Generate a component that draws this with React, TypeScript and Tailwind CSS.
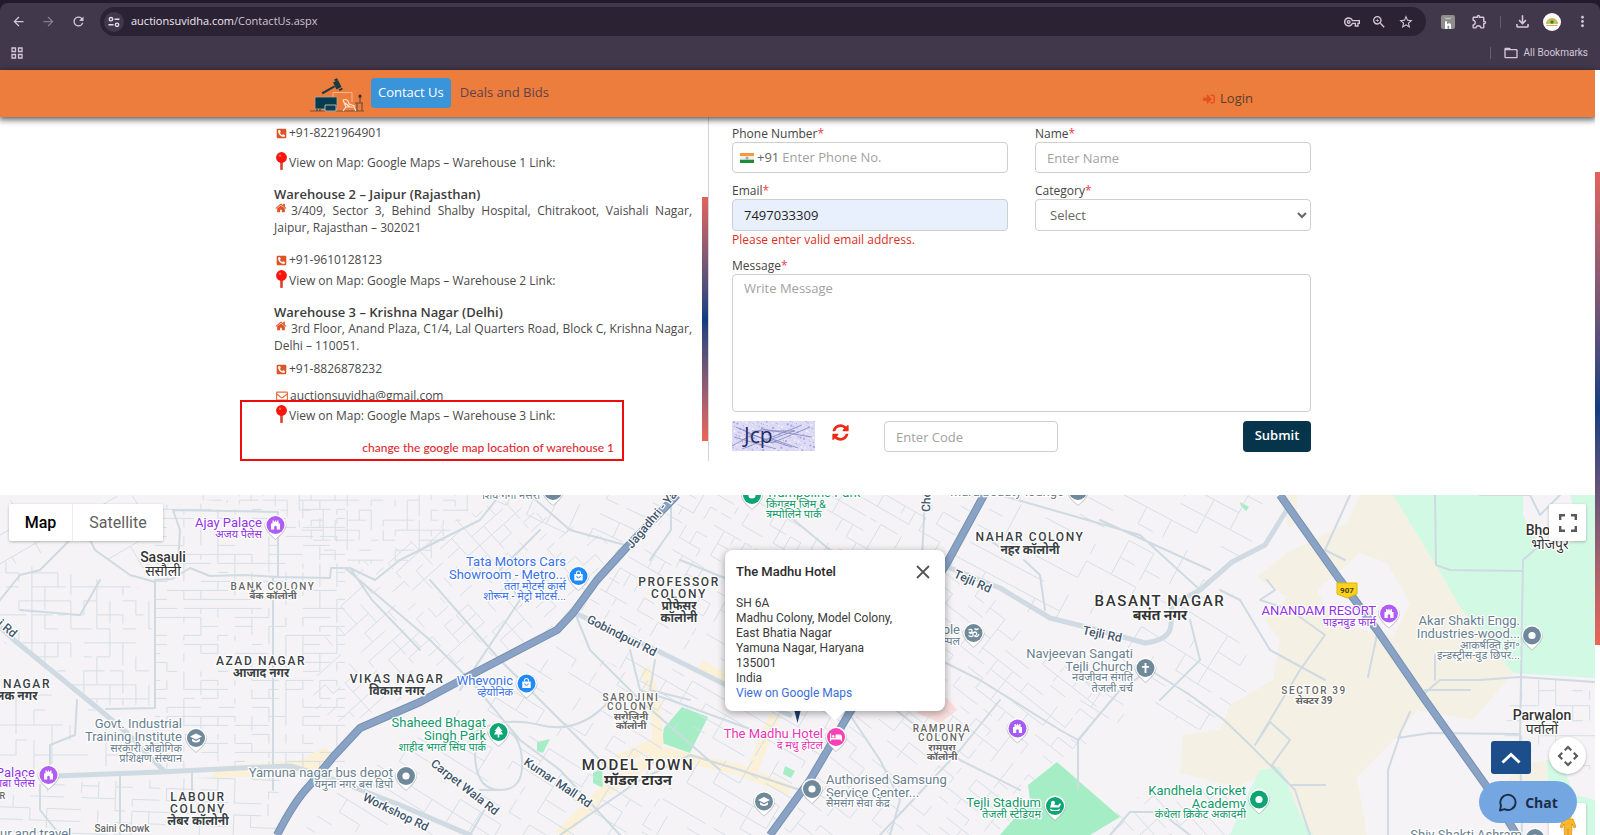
import type { ReactNode } from "react";
import {
  MdArrowBack,
  MdArrowForward,
  MdFolderOpen,
  MdMoreVert,
  MdOutlineExtension,
  MdOutlineFileDownload,
  MdOutlineVpnKey,
  MdRefresh,
  MdStarBorder,
  MdZoomIn,
} from "react-icons/md";
import { FaPhoneSquareAlt, FaRegEnvelope, FaSignInAlt } from "react-icons/fa";

/* ---------- Browser chrome ---------- */

function IconButton({ label, children, dim }: { label: string; children: ReactNode; dim?: boolean }) {
  return (
    <button
      type="button"
      aria-label={label}
      className={
        dim
          ? "flex size-6 shrink-0 items-center justify-center text-[15px] text-[#857d8e]"
          : "flex size-6 shrink-0 items-center justify-center text-[15px] text-[#d3c8da]"
      }
    >
      {children}
    </button>
  );
}

function BrowserBar() {
  return (
    <div className="bg-[#241a2d] pt-[3px] font-['Open_Sans','Noto_Sans',sans-serif] text-[#d3c8da]">
      <div className="rounded-t-lg bg-[#42384b]">
        <div className="flex items-center pt-1 pr-[6px] pl-[6px]">
          <IconButton label="Back"><MdArrowBack /></IconButton>
          <span className="w-[6px]" />
          <IconButton label="Forward" dim><MdArrowForward /></IconButton>
          <span className="w-[6px]" />
          <IconButton label="Reload"><MdRefresh /></IconButton>
          <div className="ml-[10px] flex h-[29px] flex-1 items-center rounded-full bg-[#2b2234] pr-2 pl-1">
            <span className="flex size-5 items-center justify-center rounded-full bg-[#42384b]">
              <svg viewBox="0 0 12 12" className="size-3" fill="none" stroke="#e4dce9" strokeWidth="1.4">
                <circle cx="3" cy="3.2" r="1.7" />
                <path d="M6.5 3.2H11.5M.5 8.8H5.5" />
                <circle cx="9" cy="8.8" r="1.7" />
              </svg>
            </span>
            <span className="ml-[7px] flex-1 text-[11px] text-[#cfc6d6]">
              <span className="text-[#efe9f3]">auctionsuvidha.com</span>/ContactUs.aspx
            </span>
            <IconButton label="Passwords"><MdOutlineVpnKey className="text-[16px]" /></IconButton>
            <span className="w-[3px]" />
            <IconButton label="Zoom"><MdZoomIn className="text-[16px]" /></IconButton>
            <span className="w-[3px]" />
            <IconButton label="Bookmark"><MdStarBorder className="text-[16px]" /></IconButton>
          </div>
          <span className="w-[10px]" />
          <IconButton label="Extension">
            <svg viewBox="0 0 14 14" className="size-[14px]">
              <rect width="14" height="14" rx="2" fill="#8e8e8c" />
              <path d="M4 2.5 5.5 4 7 3 8.5 4 10 2.5" fill="none" stroke="#d9d9d6" />
              <path d="M4 6.500 6 6V9Q10 7 10 10V14H8.200V11Q7 10 6.500 11V14H4Z" fill="#fff" />
            </svg>
          </IconButton>
          <span className="w-[7px]" />
          <IconButton label="Extensions"><MdOutlineExtension className="text-[17px]" /></IconButton>
          <span className="mx-[9px] h-3 w-px bg-[#675d70]" />
          <IconButton label="Downloads"><MdOutlineFileDownload className="text-[19px]" /></IconButton>
          <span className="w-[6px]" />
          <IconButton label="Profile">
            <svg viewBox="0 0 18 18" className="size-[18px] shrink-0">
              <circle cx="9" cy="9" r="9" fill="#fff" />
              <path d="M3 11A6 6 0 0 1 15 11Z" fill="#e5a64c" />
              <path d="M4.500 11A4.500 4.500 0 0 1 13.500 11Z" fill="#b9cf62" />
              <circle cx="9" cy="9" r="1.800" fill="#2f8a44" />
              <path d="M3.500 12.500H14.500" stroke="#e5a64c" />
            </svg>
          </IconButton>
          <span className="w-[6px]" />
          <IconButton label="Menu"><MdMoreVert className="text-[17px]" /></IconButton>
        </div>
        <div className="flex h-[34px] items-center pr-3 pb-[1px] pl-[11px]">
          <button type="button" aria-label="Apps">
            <svg viewBox="0 0 12 12" className="size-3" fill="none" stroke="#d3c8da" strokeWidth="1.300">
              <path d="M1 1H4.500V4.500H1ZM7.500 1H11V4.500H7.500ZM1 7.500H4.500V11H1ZM7.500 7.500H11V11H7.500Z" />
            </svg>
          </button>
          <span className="mr-3 ml-auto h-3 w-px bg-[#675d70]" />
          <button type="button" className="flex items-center gap-[5px] font-['Roboto',sans-serif] text-[10px]">
            <MdFolderOpen className="text-[16px]" />
            All Bookmarks
          </button>
        </div>
      </div>
    </div>
  );
}

/* ---------- Site header ---------- */

function Logo() {
  return (
    <svg viewBox="0 0 54 34" className="h-[34px] w-[54px] shrink-0" aria-label="Auction Suvidha">
      <path d="M0 33H54" stroke="#5b4a3f" strokeWidth=".8" />
      <g fill="#1c3944">
        <path d="M11.500 14.500 24 7.500 25 9.200 12.800 16.300Z" />
        <path d="m23 4.500 5-2.500 3.500 7-5 2.500Z" />
        <path d="M24 1.500 27 .2 28.200 2 25.200 3.500ZM28.500 11.500 32 9.800 32.800 11.500 29.500 13Z" />
      </g>
      <path d="M23 20V14.500H42V24" fill="none" stroke="#f6c9a8" strokeWidth=".8" />
      <path d="M5 19H27V31H5Z" fill="#063b4f" stroke="#b9a58e" strokeWidth=".8" />
      <path d="M15 27H26V33H15Z" fill="#0a3f53" stroke="#c9c0b0" strokeWidth=".9" />
      <path d="M7 31V33M10 31V33" stroke="#063b4f" />
      <path d="M33 22Q38 20 39 26L45 28M33 22 36 29H44M36 29 33 33M44 29 46 33M35 25 40 29" fill="none" stroke="#fbe6d5" strokeWidth="1.200" />
      <path d="M45 25H53M47 25V33M52 25V33M50 25V19M48.500 19H51.500" fill="none" stroke="#6b4a3b" strokeWidth="1.100" />
      <circle cx="50" cy="18" r="1.500" fill="#3a2a2a" />
    </svg>
  );
}

function SiteHeader() {
  return (
    <header className="relative z-20 h-[47px] bg-[#ec7d3c] shadow-[0_2px_6px_1px_rgba(0,0,0,0.6)]">
      <div className="mx-auto flex h-full max-w-[975px] items-start pt-2 text-[13px]">
        <Logo />
        <nav className="ml-[7px] flex items-center">
          <a href="#contact" className="flex h-[30px] items-center rounded bg-[#3a94da] px-[7px] font-medium text-white">
            Contact Us
          </a>
          <a href="#deals" className="ml-[9px] text-[#5d4250]">Deals and Bids</a>
        </nav>
        <a href="#login" className="mr-8 ml-auto flex items-center gap-[5px] pt-[11px] text-[13px] text-[#5d3f2c]">
          <FaSignInAlt className="text-[12px] text-[#e8501f]" />
          Login
        </a>
      </div>
    </header>
  );
}

/* ---------- Warehouse addresses ---------- */

function PhoneLine({ number }: { number: string }) {
  return (
    <p className="flex items-center gap-[2px] pl-[2px]">
      <FaPhoneSquareAlt className="text-[11px] text-[#dd5526]" />
      {number}
    </p>
  );
}

function HomeIcon() {
  return (
    <svg viewBox="0 0 1792 1792" className="mr-1 ml-[1px] inline size-3 align-[1px]" fill="#dd5526">
      <path d="M1472 992v480q0 26-19 45t-45 19h-384v-384h-256v384h-384q-26 0-45-19t-19-45v-480q0-1 .5-3t.5-3l575-474 575 474q1 2 1 6zm223-69l-62 74q-8 9-21 11h-3q-13 0-21-7l-692-577-692 577q-12 8-24 7-13-2-21-11l-62-74q-8-10-7-23.500t11-21.500l719-599q32-26 76-26t76 26l244 204v-195q0-14 9-23t23-9h192q14 0 23 9t9 23v408l219 182q10 8 11 21.500t-7 23.500z" />
    </svg>
  );
}

function MapLink({ n }: { n: number }) {
  return (
    <a href={`#warehouse-${n}`} className="flex items-center gap-[2px] pl-[2px]">
      <svg viewBox="0 0 11 18" className="-mt-2 -mb-1 h-[18px] w-[11px]">
        <path d="M4.200 9H6.800V17.500Q5.500 18.500 4.200 17.500Z" fill="#d9432f" />
        <circle cx="5.500" cy="5.500" r="5.400" fill="#fb1409" />
        <circle cx="4" cy="3.800" r="1.200" fill="#ff6a57" />
      </svg>
      View on Map: Google Maps – Warehouse {n} Link:
    </a>
  );
}

function Warehouses() {
  return (
    <section className="relative w-[439px] border-r border-[#d5d5d5] pt-2 pr-4 pl-1 text-[12px] leading-4 text-[#4a4a4a]">
      <div className="absolute top-20 right-0 h-[244px] w-[6px] bg-linear-to-b from-[#e3625a] via-[#0f3d80] via-50% to-[#ec6556]" />
      <PhoneLine number="+91-8221964901" />
      <div className="mt-[14px]"><MapLink n={1} /></div>
      <h2 className="mt-[15px] text-[13px] leading-4 font-semibold text-[#3c3c3c]">Warehouse 2 – Jaipur (Rajasthan)</h2>
      <p className="text-justify leading-[17px]">
        <HomeIcon />
        3/409, Sector 3, Behind Shalby Hospital, Chitrakoot, Vaishali Nagar, Jaipur, Rajasthan – 302021
      </p>
      <div className="mt-4"><PhoneLine number="+91-9610128123" /></div>
      <div className="mt-[5px]"><MapLink n={2} /></div>
      <h2 className="mt-[15px] text-[13px] leading-4 font-semibold text-[#3c3c3c]">Warehouse 3 – Krishna Nagar (Delhi)</h2>
      <p className="text-justify leading-[17px]">
        <HomeIcon />
        3rd Floor, Anand Plaza, C1/4, Lal Quarters Road, Block C, Krishna Nagar, Delhi – 110051.
      </p>
      <div className="mt-[7px]"><PhoneLine number="+91-8826878232" /></div>
      <a href="mailto:auctionsuvidha@gmail.com" className="mt-[11px] flex items-center gap-[2px] pl-[2px]">
        <FaRegEnvelope className="text-[12px] text-[#e3703f]" />
        auctionsuvidha@gmail.com
      </a>
      <div className="relative -mt-1 -ml-[34px] h-[61px] w-[384px] border-2 border-[#ee0c0c] bg-white pt-[6px] pl-8">
        <MapLink n={3} />
        <p className="mt-4 pr-2 text-right font-['Lato',sans-serif] text-[12px] font-medium text-[#dc2c33]">
          change the google map location of warehouse 1
        </p>
      </div>
    </section>
  );
}

/* ---------- Contact form ---------- */

function Label({ htmlFor, children }: { htmlFor: string; children: ReactNode }) {
  return (
    <label htmlFor={htmlFor} className="block pt-px leading-[17px] text-[#444]">
      {children}
      <span className="text-[#f03c3c]">*</span>
    </label>
  );
}

function Captcha() {
  const dots = Array.from({ length: 260 }, (_, i) => [(i * 37.7) % 83, (i * 17.3 + (i % 7) * 5) % 30]);
  return (
    <svg viewBox="0 0 83 30" className="h-[30px] w-[83px]" role="img" aria-label="Captcha">
      <rect width="83" height="30" fill="#dddaf5" />
      {dots.map(([x, y], i) => (
        <circle key={i} cx={x} cy={y} r={i % 3 ? 0.7 : 1.1} fill={i % 2 ? "#aaa4e4" : "#f4f2fd"} />
      ))}
      <path
        d="M0 25 30 8 80 16M4 6 40 22 78 6M10 28 50 12 70 4M14 12 60 26M20 10H62L40 18 66 27M2 16 44 28"
        fill="none"
        stroke="#7f86bd"
        strokeWidth=".8"
      />
      <text x="12" y="22" fill="#1f2a66" fontSize="21" fontWeight="500" className="font-['Open_Sans',sans-serif]">Jcp</text>
    </svg>
  );
}

const field = "w-full rounded border border-[#cfcfcf] bg-white outline-none placeholder:text-[#a2a2a2]";

function ContactForm() {
  return (
    <form className="flex-1 pt-[7px] pr-[14px] pl-[23px] text-[12px]" onSubmit={(e) => e.preventDefault()}>
      <div className="grid grid-cols-2 gap-x-[27px]">
        <div className="h-[57px]">
          <Label htmlFor="phone">Phone Number</Label>
          <div className={`${field} flex h-[31px] items-center pl-[7px] text-[13px]`}>
            <svg viewBox="0 0 14 10" className="h-[10px] w-[14px]">
              <path d="M0 0H14V3.300H0Z" fill="#f39a3c" />
              <path d="M0 3.300H14V6.700H0Z" fill="#f2f0ee" />
              <path d="M0 6.700H14V10H0Z" fill="#1e8a3a" />
              <circle cx="7" cy="5" r="1.100" fill="none" stroke="#667" strokeWidth=".6" />
            </svg>
            <span className="ml-[3px] text-[#666]">+91</span>
            <input id="phone" placeholder="Enter Phone No." className="ml-[3px] min-w-0 flex-1 outline-none placeholder:text-[#a2a2a2]" />
          </div>
        </div>
        <div className="h-[57px]">
          <Label htmlFor="name">Name</Label>
          <input id="name" placeholder="Enter Name" className={`${field} h-[31px] px-[11px] text-[13px]`} />
        </div>
        <div>
          <Label htmlFor="email">Email</Label>
          <input id="email" defaultValue="7497033309" className="h-[32px] w-full rounded border border-[#cfcfcf] bg-[#e8f0fd] px-[11px] text-[13px] text-[#1f1f1f] outline-none" />
          <p className="text-[12px] leading-[17px] text-[#dc2f25]">Please enter valid email address.</p>
        </div>
        <div>
          <Label htmlFor="category">Category</Label>
          <select id="category" className={`${field} h-[32px] pl-[10px] text-[13px] text-[#666]`}>
            <option>Select</option>
          </select>
        </div>
      </div>
      <div className="mt-2">
        <Label htmlFor="message">Message</Label>
        <textarea id="message" placeholder="Write Message" className={`${field} block h-[138px] resize-none px-[11px] py-1 text-[13px]`} />
      </div>
      <div className="mt-[9px] flex items-start">
        <Captcha />
        <button type="button" aria-label="Refresh captcha" className="mt-[2px] ml-4">
          <svg viewBox="0 0 1792 1792" className="size-[19px]" fill="#ee2a12">
            <path d="M1639 1056q0 5-1 7-64 268-268 434.500t-478 166.500q-146 0-282.500-55t-243.500-157l-129 129q-19 19-45 19t-45-19-19-45v-448q0-26 19-45t45-19h448q26 0 45 19t19 45-19 45l-137 137q71 66 161 102t187 36q134 0 250-65t186-179q11-17 53-117 8-23 30-23h192q13 0 22.500 9.500t9.500 22.500zm25-800v448q0 26-19 45t-45 19h-448q-26 0-45-19t-19-45 19-45l138-138q-148-137-349-137-134 0-250 65t-186 179q-11 17-53 117-8 23-30 23h-199q-13 0-22.500-9.500t-9.500-22.500v-7q65-268 270-434.500t480-166.500q146 0 284 55.500t245 156.500l130-129q19-19 45-19t45 19 19 45z" />
          </svg>
        </button>
        <input
          id="code"
          aria-label="Captcha code"
          placeholder="Enter Code"
          className="ml-[34px] h-[31px] w-[174px] rounded border border-[#cfcfcf] px-[11px] text-[13px] outline-none placeholder:text-[#a2a2a2]"
        />
        <button type="submit" className="ml-auto h-[31px] w-[68px] rounded bg-[#06344b] pb-[2px] text-[13px] font-semibold text-white">
          Submit
        </button>
      </div>
    </form>
  );
}

/* ---------- Map ---------- */

type Pt = [number, number];

interface District {
  poly: string;
  box: [number, number, number, number];
  angle: number;
  dx: number;
  dy: number;
  seed: number;
}

const districts: District[] = [
  { poly: "155,505 345,500 345,770 155,770", box: [155, 495, 195, 280], angle: 0, dx: 17, dy: 9, seed: 3 },
  { poly: "0,560 150,590 155,705 100,705 0,640", box: [0, 550, 160, 160], angle: 0, dx: 13, dy: 14, seed: 9 },
  { poly: "0,680 90,705 150,765 0,770", box: [0, 660, 160, 120], angle: 0, dx: 18, dy: 15, seed: 19 },
  { poly: "0,785 280,775 275,835 0,835", box: [0, 775, 300, 70], angle: 2, dx: 17, dy: 12, seed: 5 },
  { poly: "0,500 150,495 150,580 60,545 0,570", box: [0, 490, 160, 100], angle: -30, dx: 27, dy: 25, seed: 12 },
  { poly: "170,495 480,495 430,560 340,565 280,510", box: [160, 490, 330, 80], angle: 0, dx: 12, dy: 10, seed: 16 },
  { poly: "345,570 500,500 625,545 560,625 345,725 300,700", box: [290, 480, 350, 260], angle: -42, dx: 16, dy: 12, seed: 7 },
  { poly: "340,790 560,640 690,700 650,835 300,835", box: [290, 620, 420, 230], angle: 32, dx: 24, dy: 15, seed: 21 },
  { poly: "480,495 670,495 620,545 500,520", box: [470, 480, 210, 80], angle: 25, dx: 22, dy: 16, seed: 25 },
  { poly: "685,495 980,495 850,710 580,610", box: [560, 480, 430, 250], angle: 30, dx: 12, dy: 14, seed: 31 },
  { poly: "580,640 850,715 770,835 640,835 700,740", box: [570, 620, 300, 230], angle: 30, dx: 23, dy: 13, seed: 33 },
  { poly: "950,560 1130,720 1040,770 1000,835 780,835 860,710", box: [770, 550, 370, 300], angle: 38, dx: 19, dy: 12, seed: 40 },
  { poly: "1000,495 1280,495 1250,545 1190,600 1040,620 950,560", box: [940, 480, 350, 150], angle: 28, dx: 28, dy: 19, seed: 43 },
  { poly: "1100,640 1210,590 1260,680 1200,730 1130,700 1060,760", box: [1050, 580, 220, 190], angle: 32, dx: 26, dy: 19, seed: 47 },
  { poly: "1515,680 1595,680 1595,770 1500,755", box: [1490, 670, 110, 100], angle: 0, dx: 17, dy: 15, seed: 51 },
  { poly: "1120,800 1240,780 1230,835 1110,835", box: [1100, 770, 150, 80], angle: 48, dx: 20, dy: 13, seed: 57 },
];

function random(seed: number) {
  let s = seed * 7919 + 13;
  return () => {
    s = (s * 16807) % 2147483647;
    return s / 2147483647;
  };
}

/* Broken rows and columns of streets, laid out on a rotated grid. */
function streets({ box: [x, y, w, h], angle, dx, dy, seed }: District) {
  const next = random(seed);
  const cx = x + w / 2;
  const cy = y + h / 2;
  const r = Math.hypot(w, h) / 2;
  const a = (angle * Math.PI) / 180;
  const at = (u: number, v: number): Pt => [
    Math.round((cx + u * Math.cos(a) - v * Math.sin(a)) * 10) / 10,
    Math.round((cy + u * Math.sin(a) + v * Math.cos(a)) * 10) / 10,
  ];
  const parts: string[] = [];
  for (let v = -r; v < r; v += dy) {
    for (let u = -r; u < r; u += dx) {
      if (next() < 0.58) parts.push(`M${at(u, v)}L${at(u + dx * (next() < 0.25 ? 0.6 : 1), v)}`);
      if (next() < 0.48) parts.push(`M${at(u, v)}L${at(u, v + dy * (next() < 0.2 ? 0.6 : 1))}`);
    }
  }
  return parts.join("");
}

const collectors = [
  "M173 510 278 512 278 577 330 578 331 568 350 568 372 600 420 650",
  "M155 580 172 579 190 568 210 576 245 575 278 577",
  "M173 510 180 530 178 565",
  "M155 580V708L106 709",
  "M273 577V765",
  "M0 600 20 575 40 570 70 540 85 530 95 550 130 575 155 582",
  "M20 610 80 615 100 580",
  "M50 775V745L75 735 77 700",
  "M120 775V835M192 772V790 M273 765V790",
  "M40 785V810L60 835",
  "M350 568 375 580 400 560 480 520 500 495",
  "M345 568 430 640 470 680 520 740 560 770 620 835",
  "M430 580 500 660 560 720 620 780",
  "M540 530 500 570 520 600 460 690",
  "M530 495 570 530 625 545",
  "M575 613 590 650 640 700 720 770",
  "M470 735Q500 715 540 725T610 700",
  "M475 755Q480 730 500 730T522 760 500 790 475 755",
  "M490 800 470 835M500 790 480 790",
  "M560 835 640 780 690 755 740 770 800 790",
  "M630 650 640 690 670 700 780 740",
  "M655 660 650 690 690 700",
  "M671 495V530L650 560",
  "M770 500 830 550 900 580",
  "M925 495 922 560M680 560 730 580",
  "M850 715 880 760 900 800 890 835",
  "M870 690 960 760 1020 790",
  "M900 640 980 680 1060 730 1078 740 1078 790",
  "M1078 740 1120 690 1150 670",
  "M1000 700 960 750 880 835",
  "M1024 560 1040 575 1045 610M990 540 1010 555",
  "M1000 495 1140 535 1200 590",
  "M1100 520 1210 570",
  "M1150 670 1190 695 1224 720 1250 745 1270 765 1295 790 1310 835",
  "M1190 620 1200 660 1160 700",
  "M1255 745 1270 722 1290 740 1272 765 1290 785 1325 785",
  "M1255 745 1300 670 1325 635 1290 610 1260 600 1275 590 1267 580",
  "M1435 495 1436 565 1450 570 1522 571",
  "M1522 835 1520 740 1523 560 1540 545",
  "M1420 697 1440 680 1480 680 1520 677 1595 682",
  "M1425 690 1470 690",
  "M1398 738 1410 712M1398 738 1430 733 1520 734",
  "M1388 835V770L1400 735",
  "M1480 495 1530 495 1540 515 1560 495",
  "M1378 630 1368 677M1345 560 1325 550 1350 495",
  "M1220 590 1240 600 1270 650 1325 680",
  "M1110 835 1130 812 1160 812 1190 835",
  "M1435 680V655",
];

const arterials = [
  "M0 627 14 640 100 710 127 733 163 770",
  "M55 776 160 772 240 768 290 766 330 778 400 805 470 835",
  "M575 613 660 652 730 687 790 715",
  "M945 566 1000 588 1050 618 1090 628 1145 643Q1170 640 1171 625L1172 605 1200 590 1232 562 1265 545 1288 508",
];

const highways = [
  "M277 835Q295 800 310 785L333 757 360 728 420 702 467 677 557 630 573 613 597 580 627 547 677 495",
  "M984 495 947 563 850 712 810 780 770 835",
  "M1280 495 1340 580 1377 630 1423 697 1487 787 1517 835",
];

type Glyph = "dot" | "fort" | "school" | "bag" | "tree" | "bed" | "cross" | "om" | "stadium";

const glyphs: Record<Glyph, ReactNode> = {
  dot: <circle r="3.6" fill="#fff" />,
  fort: <path d="M-4.500 4.500V-1.500H-3V-4.500H-1.700V-3.300H-.6V-4.500H.6V-3.300H1.700V-4.500H3V-1.500H4.500V4.500H1.300V1.500Q0 0-1.300 1.500V4.500Z" fill="#fff" />,
  school: <path d="M0-4.500 6-1.500 0 1.500-6-1.500ZM-4 .8V3Q0 6 4 3V.8L0 3Z" fill="#fff" />,
  bag: (
    <>
      <path d="M-4.200-2H4.200V4.500H-4.200Z" fill="#fff" />
      <path d="M-2-2V-3A2 2 0 0 1 2-3V-2" fill="none" stroke="#fff" strokeWidth="1.200" />
      <path d="M-1.800 0A1.800 1.800 0 0 0 1.800 0" fill="none" stroke="#1f8bfa" />
    </>
  ),
  tree: <path d="M0-6 4-1H2.500L4.500 2.500H.8V5.500H-.8V2.500H-4.500L-2.500-1H-4Z" fill="#fff" />,
  bed: <path d="M-6-3.500H-4.800V1H-.5V-2.500H4.500Q6-2 6 0V4H4.800V2.400H-4.800V4H-6ZM-2.700-2A1.400 1.400 0 1 1-2.800-2Z" fill="#fff" />,
  cross: <path d="M-.9-5H.9V-2H3.500V-.3H.9V5H-.9V-.3H-3.500V-2H-.9Z" fill="#fff" />,
  om: (
    <path
      d="M-5-3Q-1-5-1.500-1.500T-4-.5Q0-1-.5 2T-5 2.500M-.5 0Q2-2 3 0T1 3Q4 5 5.500 1M1-4.500Q3-2.500 5-4.500"
      fill="none"
      stroke="#fff"
      strokeWidth="1.300"
    />
  ),
  stadium: <path d="M-4-3.500A2 2 0 1 1-1-1.500L3-.5 5-3 6-1.500 4 1.500H-5L-4-1.500ZM-5.500 2.500Q0 5.500 5.500 2.500L4 5H-4Z" fill="#fff" />,
};

const pins: [number, number, string, Glyph][] = [
  [275.5, 525, "#b25cf5", "fort"],
  [196, 738, "#70899a", "school"],
  [48.5, 775, "#b25cf5", "fort"],
  [406, 776, "#70899a", "dot"],
  [578.5, 576, "#1f8bfa", "bag"],
  [526.5, 683.5, "#1f8bfa", "bag"],
  [498.500, 732, "#0da573", "tree"],
  [553, 491, "#70899a", "dot"],
  [752, 495, "#0da573", "dot"],
  [1078, 491, "#70899a", "dot"],
  [973.500, 633, "#70899a", "om"],
  [1145.500, 668, "#70899a", "cross"],
  [836, 737, "#f641b8", "bed"],
  [1017.500, 728.500, "#a65cf2", "fort"],
  [812, 789, "#70899a", "dot"],
  [764, 801.500, "#70899a", "school"],
  [1055, 806, "#0da573", "stadium"],
  [1259, 799.500, "#0da573", "dot"],
  [1389, 613.500, "#b25cf5", "fort"],
  [1532, 635.500, "#70899a", "dot"],
  [1535, 838, "#70899a", "dot"],
];

type Anchor = "start" | "middle" | "end";

const violet = "#9333e6";
const slate = "#6a8090";
const blue = "#3a70e8";
const green = "#129a69";
const pink = "#ec35b5";

/* x, anchor, colour, then [baseline, font size, text] for each line */
const places: [number, Anchor, string, [number, number, string][]][] = [
  [262, "end", violet, [[527, 13, "Ajay Palace"], [538, 11, "अजय पैलेस"]]],
  [182, "end", slate, [[728, 13, "Govt. Industrial"], [741, 13, "Training Institute"], [752, 11, "सरकारी औद्योगिक"], [762, 11, "प्रशिक्षण संस्थान"]]],
  [35, "end", violet, [[777, 13, "Palace"], [787, 11, "बाबा पैलेस"]]],
  [393, "end", slate, [[777, 13, "Yamuna nagar bus depot"], [788, 11, "यमुना नगर बस डिपो"]]],
  [566, "end", blue, [[566, 13, "Tata Motors Cars"], [579, 13, "Showroom - Metro..."], [590, 11, "तता मोटर्स कार्स"], [600, 11, "शोरूम - मेट्रो मोटर्स..."]]],
  [513, "end", blue, [[685, 13, "Whevonic"], [696, 11, "व्हेयोनिक"]]],
  [486, "end", green, [[727, 13, "Shaheed Bhagat"], [740, 13, "Singh Park"], [751, 11, "शाहीद भगत सिंघ पार्क"]]],
  [540, "end", slate, [[499, 11, "शिव गंगा नर्सरी"]]],
  [766, "start", green, [[497, 13, "Trampoline Park"], [508, 11, "किंगडम जिम &"], [518, 11, "त्रम्पोलिने पार्क"]]],
  [1064, "end", slate, [[496, 13, "Mara beauty lounge"]]],
  [960, "end", slate, [[634, 13, "Temple"], [645, 11, "टेम्पल"]]],
  [1133, "end", slate, [[658, 13, "Navjeevan Sangati"], [671, 13, "Tejli Church"], [681, 11, "नवजीवन संगति"], [692, 11, "तेजली चर्च"]]],
  [823, "end", pink, [[738, 13, "The Madhu Hotel"], [749, 11, "द मधु होटल"]]],
  [826, "start", slate, [[784, 13, "Authorised Samsung"], [797, 13, "Service Center..."], [807, 11, "सैमसंग सेवा केंद्र"]]],
  [1041, "end", green, [[807, 13, "Tejli Stadium"], [818, 11, "तेजली स्टेडियम"]]],
  [1246, "end", green, [[795, 13, "Kandhela Cricket"], [808, 13, "Academy"], [818, 11, "कंधेला क्रिकेट अकादमी"]]],
  [1376, "end", violet, [[615, 13, "ANANDAM RESORT"], [626, 11, "पाइनवुड फार्म"]]],
  [1520, "end", slate, [[625, 13, "Akar Shakti Engg."], [638, 13, "Industries-wood..."], [649, 11, "आकर्षक्ति इंग॰"], [659, 11, "इन्डस्ट्रीस-वुड छिपर..."]]],
  [1522, "end", slate, [[839, 13, "Shiv Shakti Ashram"]]],
  [0, "start", slate, [[838, 13, "ur and travel"]]],
];

/* x, wide capitals, colour, capitals' lines, then the Hindi lines */
type Line = [number, number, string];
const areas: [number, boolean, string, Line[], Line[]][] = [
  [163, false, "#333", [[562, 14, "Sasauli"]], [[576, 14, "ससौली"]]],
  [273, true, "#666", [[590, 10, "BANK COLONY"]], [[599, 10, "बैंक कॉलोनी"]]],
  [261, true, "#3a3f44", [[665, 12, "AZAD NAGAR"]], [[677, 12, "आजाद नगर"]]],
  [397, true, "#3a3f44", [[683, 12, "VIKAS NAGAR"]], [[695, 12, "विकास नगर"]]],
  [27, true, "#3a3f44", [[688, 12, "NAGAR"]], []],
  [11, true, "#3a3f44", [], [[700, 12, "तिलक नगर"]]],
  [198, true, "#3a3f44", [[801, 12, "LABOUR"], [813, 12, "COLONY"]], [[825, 12, "लेबर कॉलोनी"]]],
  [679, true, "#3a3f44", [[586, 12, "PROFESSOR"], [598, 12, "COLONY"]], [[610, 12, "प्रोफेसर"], [622, 12, "कॉलोनी"]]],
  [631, true, "#666", [[701, 10, "SAROJINI"], [710, 10, "COLONY"]], [[720, 10, "सरोजिनी"], [729, 10, "कॉलोनी"]]],
  [638, true, "#333", [[770, 15, "MODEL TOWN"]], [[785, 15, "मॉडल टाउन"]]],
  [1030, true, "#3a3f44", [[541, 12, "NAHAR COLONY"]], [[554, 12, "नहर कॉलोनी"]]],
  [1160, true, "#333", [[606, 15, "BASANT NAGAR"]], [[620, 14, "बसंत नगर"]]],
  [942, true, "#666", [[732, 10, "RAMPURA"], [741, 10, "COLONY"]], [[751, 10, "रामपुरा"], [760, 10, "कॉलोनी"]]],
  [1314, true, "#666", [[694, 10, "SECTOR 39"]], [[704, 10, "सेक्टर 39"]]],
  [1550, false, "#333", [[535, 14, "Bhojpur"]], [[549, 14, "भोजपुर"]]],
  [1542, false, "#333", [[720, 14, "Parwalon"]], [[734, 14, "पर्वालों"]]],
  [122, false, "#666", [[832, 10, "Saini Chowk"]], []],
  [3, true, "#666", [[799, 9, "R"]], []],
];

const roadNames: [number, number, number, string][] = [
  [-3, 625, 40, "i Rd"],
  [632, 549, -50, "Jagadhri - Yamuna"],
  [586, 622, 27, "Gobindpuri Rd"],
  [430, 765, 38, "Carpet Wala Rd"],
  [523, 764, 34, "Kumar Mall Rd"],
  [362, 800, 26, "Workshop Rd"],
  [953, 577, 24, "Tejli Rd"],
  [1082, 634, 12, "Tejli Rd"],
  [930, 512, -88, "Chowk"],
];

function MapCanvas() {
  return (
    <svg
      viewBox="0 495 1595 340"
      preserveAspectRatio="xMinYMin slice"
      className="absolute inset-0 size-full font-['Roboto','Noto_Sans',sans-serif]"
      aria-label="Map of Yamuna Nagar"
    >
      <rect x="0" y="495" width="1595" height="340" fill="#f5f3f5" />
      <g fill="#f5f0e4">
        <path d="M1277 495H1297V520L1290 530ZM1360 495H1393L1437 567 1460 607 1513 673 1473 720 1417 710 1397 737 1357 777 1367 835H1310L1297 810 1280 767 1237 787 1180 773 1183 735 1220 730 1230 705 1273 680 1280 640 1265 620 1287 597 1257 577 1287 553 1347 523Z" />
        <path d="M1520 765 1547 760V790H1500Z" />
      </g>
      <path d="M1360 553 1387 563 1410 603 1393 637 1333 623 1317 590Z" fill="#f5f3f5" />
      <g fill="#d1f9e4">
        <path d="M1393 495H1595V678L1513 673 1460 607 1437 567Z" />
        <path d="M1260 770 1280 767 1300 815 1313 835H1230L1245 800Z" />
        <path d="M1547 760 1560 762 1575 795 1595 800V835H1550Z" />
      </g>
      <path d="M1523 495H1570L1583 540 1540 548 1523 515Z" fill="#f5f3f5" />
      <g fill="#a5edc5">
        <path d="M1057 762 1120 817 1090 835H1000L1030 800 1028 785Z" />
        <path d="M682 707 708 717 690 753 662 743 664 728Z" />
        <path d="M537 742 550 739 543 753 537 751ZM593 773 602 768 603 788 593 783ZM785 766 795 771 791 778 783 774ZM1240 502 1249 507 1246 511 1241 506Z" />
      </g>
      <path d="M947 698 957 710 940 723 917 713 930 700Z" fill="#fbdcdc" />
      <g fill="none" stroke="#fbf0d8" strokeWidth="11" strokeLinejoin="round">
        <path d="M645 668 655 700 658 742 608 765M560 835 600 795 660 752 740 770 790 790M775 715 750 775M700 665 745 690" />
      </g>
      <path d="M213 767 300 760 325 747 335 757 323 774 213 778Z" fill="#fbf0d8" />
      <defs>
        {districts.map((d) => (
          <clipPath key={d.seed} id={`district-${d.seed}`}>
            <polygon points={d.poly} />
          </clipPath>
        ))}
      </defs>
      {districts.map((d) => (
        <g key={d.seed} clipPath={`url(#district-${d.seed})`}>
          <path d={streets(d)} fill="none" stroke="#d5dfe7" strokeWidth="1" />
        </g>
      ))}
      <g fill="none" stroke="#cfdae2" strokeLinejoin="round" strokeLinecap="round">
        <path d={collectors.join("")} strokeWidth="2" />
        <path d={arterials.join("")} strokeWidth="5" />
      </g>
      <path d={highways.join("")} fill="none" stroke="#7590b5" strokeWidth="8" strokeLinejoin="round" />
      <path d={highways.join("")} fill="none" stroke="#8aa3c5" strokeWidth="6" strokeLinejoin="round" />
      <g>
        <path d="M1337 583H1357V594L1347 598 1337 594Z" fill="#fbd21c" stroke="#e0b70b" />
        <text x="1347" y="593" textAnchor="middle" fontSize="8" fontWeight="700" fill="#4b4010">907</text>
      </g>
      <path d="M793 705H802L797.500 723Z" fill="#1c3f6e" />
      <g stroke="#fff" strokeWidth="2.500" strokeLinejoin="round" className="[paint-order:stroke]">
        {roadNames.map(([x, y, angle, name], i) => (
          <text key={i} x={x} y={y} transform={`rotate(${angle} ${x} ${y})`} fontSize="12" fontWeight="500" fill="#3f556b">
            {name}
          </text>
        ))}
        {areas.map(([x, caps, color, lines, hindi], i) => (
          <g key={i} fill={color} textAnchor="middle">
            <g fontWeight="500" className={caps ? "tracking-widest" : ""}>
              {lines.map(([y, size, text]) => (
                <text key={text} x={x} y={y} fontSize={size}>{text}</text>
              ))}
            </g>
            <g fontWeight={caps ? "700" : "400"}>
              {hindi.map(([y, size, text]) => (
                <text key={text} x={x} y={y} fontSize={size}>{text}</text>
              ))}
            </g>
          </g>
        ))}
        {places.map(([x, anchor, color, lines], i) => (
          <g key={i} fill={color} textAnchor={anchor}>
            {lines.map(([y, size, text]) => (
              <text key={text} x={x} y={y} fontSize={size}>{text}</text>
            ))}
          </g>
        ))}
      </g>
      {pins.map(([x, y, color, glyph]) => (
        <g key={`${x}-${y}`} transform={`translate(${x} ${y})`}>
          <path d="M-11 1A11 11 0 1 1 11 1Q10 7 0 15Q-10 7-11 1Z" fill="#9aa3ab" opacity=".55" />
          <path d="M-10.500 0A10.500 10.500 0 1 1 10.500 0Q9.500 6 0 14Q-9.500 6-10.500 0Z" fill="#fff" />
          <circle r="9" fill={color} />
          {glyphs[glyph]}
        </g>
      ))}
    </svg>
  );
}

function InfoWindow() {
  return (
    <div className="absolute top-[55px] left-[725px] h-[161px] w-[220px] rounded-lg bg-white pl-[11px] text-[12px] leading-[15px] text-[#3a3a3a] shadow-[0_2px_7px_1px_rgba(0,0,0,0.3)]">
      <span className="absolute top-[154px] left-[103px] size-[14px] rotate-45 bg-white" />
      <div className="flex items-center justify-between pt-[14px] pr-[15px]">
        <h3 className="text-[13px] font-medium text-[#2b2b2b]">The Madhu Hotel</h3>
        <button type="button" aria-label="Close">
          <svg viewBox="0 0 14 14" className="size-[14px]" stroke="#555" strokeWidth="1.800">
            <path d="M1 1 13 13M13 1 1 13" />
          </svg>
        </button>
      </div>
      <address className="relative mt-[17px] not-italic">
        SH 6A<br />
        Madhu Colony, Model Colony,<br />
        East Bhatia Nagar<br />
        Yamuna Nagar, Haryana<br />
        135001<br />
        India<br />
        <a href="#view-map" className="text-[#3b6fd8]">View on Google Maps</a>
      </address>
    </div>
  );
}

function MapPanel() {
  return (
    <section className="relative min-h-[340px] flex-1 overflow-hidden bg-[#f5f3f5] font-['Roboto','Noto_Sans',sans-serif]">
      <MapCanvas />
      <div className="absolute top-[9px] left-[9px] flex h-[37px] rounded-xs bg-white text-[16px] shadow-[0_1px_3px_rgba(0,0,0,0.25)]">
        <button type="button" className="w-16 border-r border-[#eee] font-medium text-black">Map</button>
        <button type="button" className="w-[90px] text-[#5f5f5f]">Satellite</button>
      </div>
      <InfoWindow />
      <button
        type="button"
        aria-label="Toggle fullscreen"
        className="absolute top-[9px] right-[9px] flex size-[37px] items-center justify-center rounded-xs bg-white shadow-[0_1px_3px_rgba(0,0,0,0.25)]"
      >
        <svg viewBox="0 0 18 18" className="size-[18px]" fill="none" stroke="#5a5a5a" strokeWidth="2.400">
          <path d="M1.200 6V1.200H6M12 1.200H16.800V6M16.800 12V16.800H12M6 16.800H1.200V12" />
        </svg>
      </button>
      <button
        type="button"
        aria-label="Map camera controls"
        className="absolute top-[242px] right-[9px] flex size-[37px] items-center justify-center rounded-full bg-white shadow-[0_1px_3px_rgba(0,0,0,0.25)]"
      >
        <svg viewBox="0 0 22 22" className="size-[22px]" fill="#5a5a5a">
          <path d="M11 .5 15 4.500 13.500 6 11 3.500 8.500 6 7 4.500ZM11 21.500 7 17.500 8.500 16 11 18.500 13.500 16 15 17.500ZM.5 11 4.500 7 6 8.500 3.500 11 6 13.500 4.500 15ZM21.500 11 17.500 15 16 13.500 18.500 11 16 8.500 17.500 7Z" />
        </svg>
      </button>
      <div className="absolute top-[308px] right-[9px] flex h-[37px] w-[37px] justify-center rounded-xs bg-white pt-2 shadow-[0_1px_3px_rgba(0,0,0,0.25)]">
        <svg viewBox="0 0 16 26" className="h-[26px] w-4">
          <circle cx="8" cy="4" r="4" fill="#f5ab1d" />
          <path d="M3 8H13L16 16 14 17 12 13 11.500 26H8.500V18H7.500V26H4.500L4 13 2 17 0 16Z" fill="#fbb829" stroke="#c98209" strokeWidth=".6" />
        </svg>
      </div>
      <a
        href="#top"
        aria-label="Back to top"
        className="absolute top-[246px] right-16 flex h-[33px] w-10 items-center justify-center rounded-[3px] bg-[#1d4e8c]"
      >
        <svg viewBox="0 0 20 12" className="h-3 w-5" fill="none" stroke="#fff" strokeWidth="3">
          <path d="M1.500 10.500 10 2.500 18.500 10.500" />
        </svg>
      </a>
      <button
        type="button"
        className="absolute top-[286px] right-[18px] flex h-[42px] w-[98px] items-center justify-center gap-2 rounded-full bg-[#74a6e2] font-['Open_Sans',sans-serif] text-[14px] font-bold text-[#1c2d48]"
      >
        <svg viewBox="0 0 19 19" className="size-[19px]" fill="none" stroke="#1c2d48" strokeWidth="1.900">
          <path d="M2 17.500 3 12.500A7.600 7.600 0 1 1 6.500 16.200Z" strokeLinejoin="round" />
        </svg>
        Chat
      </button>
    </section>
  );
}

/* ---------- Page ---------- */

export default function App() {
  return (
    <div id="top" className="flex min-h-screen flex-col bg-white font-['Open_Sans','Noto_Sans',sans-serif]">
      <BrowserBar />
      <div className="flex flex-1">
        <div className="flex min-w-0 flex-1 flex-col">
          <SiteHeader />
          <main className="flex flex-1 flex-col">
            <div className="mx-auto mb-[34px] flex w-full max-w-[1055px]">
              <Warehouses />
              <ContactForm />
            </div>
            <MapPanel />
          </main>
        </div>
        <div className="relative z-30 w-[5px] bg-white pt-[102px]">
          <div className="h-[473px] bg-linear-to-b from-[#e3625a] via-[#0f3d80] via-50% to-[#ec6556]" />
        </div>
      </div>
    </div>
  );
}
